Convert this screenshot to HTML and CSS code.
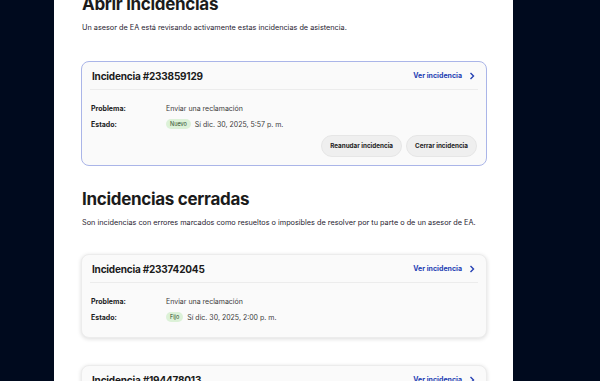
FILE: index.html
```html
<!DOCTYPE html>
<html lang="es">
<head>
    <meta charset="UTF-8">
    <meta name="viewport" content="width=device-width, initial-scale=1.0">
    <title>Incidencias</title>
    <link rel="stylesheet" href="styles.css">
</head>
<body>
    <div class="page">
        <h1 class="first">Abrir incidencias</h1>
        <p class="intro">Un asesor de EA está revisando activamente estas incidencias de asistencia.</p>

        <div class="card open">
            <div class="card-head">
                <span class="card-title">Incidencia #233859129</span>
                <a class="view" href="#">Ver incidencia
                    <svg width="6" height="8" viewBox="0 0 6 8"><path d="M1.5 1 L4.5 4 L1.5 7" fill="none" stroke="currentColor" stroke-width="1.4"/></svg>
                </a>
            </div>
            <div class="card-body">
                <div class="row"><span class="label">Problema:</span><span class="value">Enviar una reclamación</span></div>
                <div class="row"><span class="label">Estado:</span><span class="value"><span class="badge">Nuevo</span>Sí dic. 30, 2025, 5:57 p. m.</span></div>
                <div class="actions">
                    <button>Reanudar incidencia</button>
                    <button>Cerrar incidencia</button>
                </div>
            </div>
        </div>

        <h1>Incidencias cerradas</h1>
        <p class="intro closed">Son incidencias con errores marcados como resueltos o imposibles de resolver por tu parte o de un asesor de EA.</p>

        <div class="card">
            <div class="card-head">
                <span class="card-title">Incidencia #233742045</span>
                <a class="view" href="#">Ver incidencia
                    <svg width="6" height="8" viewBox="0 0 6 8"><path d="M1.5 1 L4.5 4 L1.5 7" fill="none" stroke="currentColor" stroke-width="1.4"/></svg>
                </a>
            </div>
            <div class="card-body">
                <div class="row"><span class="label">Problema:</span><span class="value">Enviar una reclamación</span></div>
                <div class="row"><span class="label">Estado:</span><span class="value"><span class="badge">Fijo</span>Sí dic. 30, 2025, 2:00 p. m.</span></div>
            </div>
        </div>

        <div class="card">
            <div class="card-head">
                <span class="card-title">Incidencia #194478013</span>
                <a class="view" href="#">Ver incidencia
                    <svg width="6" height="8" viewBox="0 0 6 8"><path d="M1.5 1 L4.5 4 L1.5 7" fill="none" stroke="currentColor" stroke-width="1.4"/></svg>
                </a>
            </div>
            <div class="card-body">
                <div class="row"><span class="label">Problema:</span><span class="value">Enviar una reclamación</span></div>
            </div>
        </div>
    </div>
</body>
</html>
```

FILE: styles.css
```css
body {
    margin: 0;
    background: #000a1e;
    font-family: Inter, "Liberation Sans", sans-serif;
    color: #1b1b1b;
    overflow: hidden;
}
.page {
    width: 406px;
    margin-left: 54px;
    padding: 0 26px 40px 27px;
    background: white;
    min-height: 100vh;
}
h1 {
    font-size: 17px;
    line-height: 24px;
    font-weight: 700;
    letter-spacing: -0.3px;
    margin: 21px 0 0 1px;
}
h1.first {
    margin-top: -8px;
}
.intro {
    font-size: 7.3px;
    line-height: 12px;
    margin: 6px 0 27px 1px;
    color: #1f2230;
}
.intro.closed {
    margin-bottom: 25px;
}
.card {
    background: #fafafa;
    border: 1px solid #ececec;
    border-radius: 8px;
    box-shadow: 0 1px 4px rgba(0,0,0,0.14);
    padding: 0 8px;
}
.card + .card {
    margin-top: 27px;
}
.card.open {
    border-color: #aab5e8;
    box-shadow: none;
}
.card-head {
    display: flex;
    justify-content: space-between;
    align-items: center;
    height: 27px;
    border-bottom: 1px solid #ececec;
    padding: 0 3px 0 2px;
}
.card-title {
    font-size: 10px;
    font-weight: 700;
    letter-spacing: -0.2px;
}
.view {
    display: flex;
    align-items: center;
    gap: 7px;
    color: #2540b3;
    font-size: 7px;
    font-weight: 700;
    text-decoration: none;
}
.card-body {
    padding: 10px 1px 12px;
}
.card.open .card-body {
    padding-bottom: 8px;
}
.row {
    display: flex;
    align-items: center;
    height: 16px;
    font-size: 7px;
}
.label {
    width: 75px;
    font-weight: 700;
}
.value {
    display: flex;
    align-items: center;
    color: #3a3a3a;
}
.badge {
    background: #dcf1d8;
    color: #2b4a27;
    font-size: 5.5px;
    padding: 2px 4px;
    border-radius: 6px;
    margin-right: 4px;
}
.actions {
    display: flex;
    justify-content: flex-end;
    gap: 4px;
    margin-top: 3px;
}
button {
    font-family: inherit;
    font-size: 6.3px;
    font-weight: 700;
    color: #222;
    background: #efefef;
    border: 1px solid #e6e6e6;
    border-radius: 11px;
    height: 22px;
    padding: 0 8px;
}
```
